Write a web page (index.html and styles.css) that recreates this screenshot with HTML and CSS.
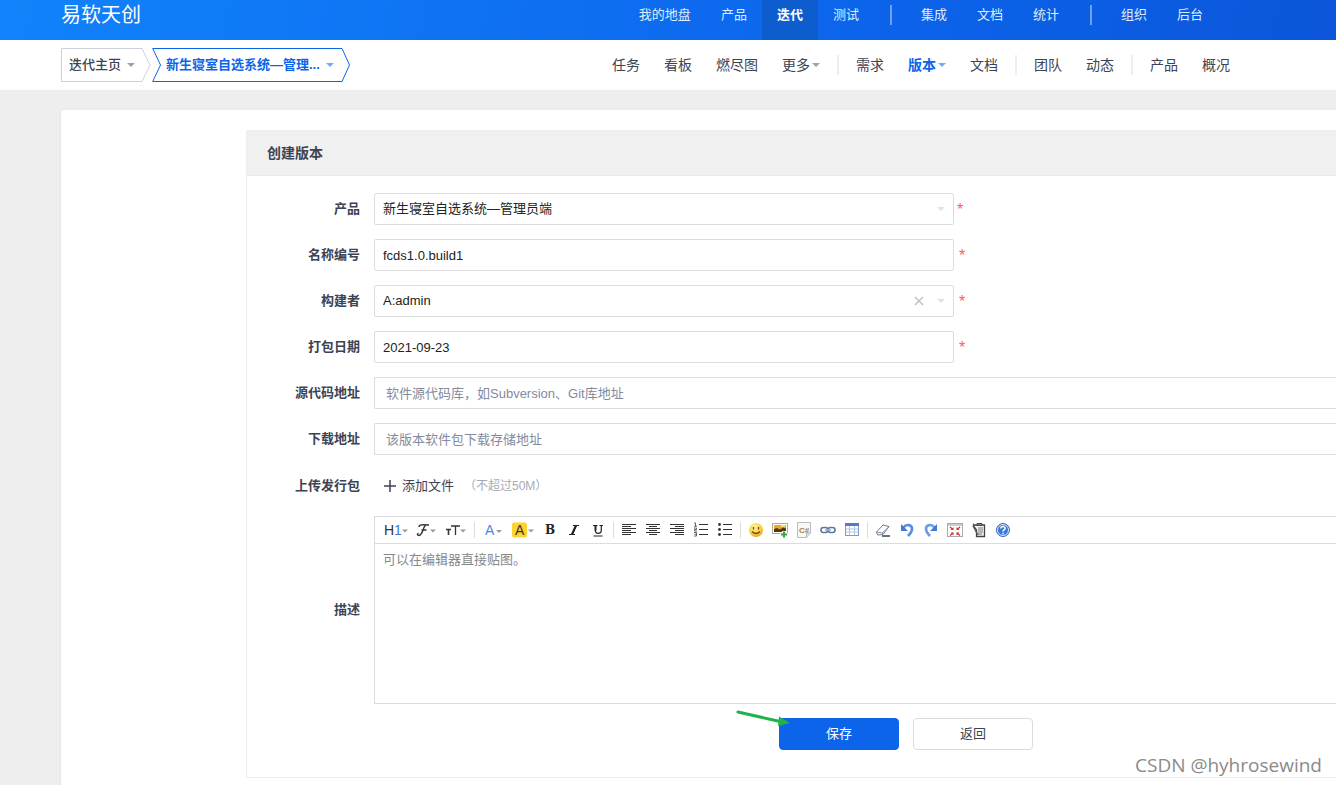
FILE: index.html
```html
<!DOCTYPE html>
<html lang="zh-CN">
<head>
<meta charset="utf-8">
<meta name="viewport" content="width=device-width, initial-scale=1">
<title>创建版本</title>
<link rel="stylesheet" href="styles.css">
</head>
<body>
<header class="topbar">
  <a class="brand" href="#">易软天创</a>
  <nav class="mainnav" aria-label="主导航">
    <a href="#">我的地盘</a><a href="#">产品</a><a href="#" class="active">迭代</a><a href="#">测试</a>
    <span class="divider"></span>
    <a href="#">集成</a><a href="#">文档</a><a href="#">统计</a>
    <span class="divider"></span>
    <a href="#">组织</a><a href="#">后台</a>
  </nav>
</header>

<div class="subbar">
  <div class="crumbs">
    <button type="button" class="crumb crumb-home">
      <svg class="crumb-shape" width="90" height="34" viewBox="0 0 90 34"><path d="M81 .5H.5v33H81l8-16.500z" fill="#fff" stroke="#cbd0db"/></svg>
      <span class="crumb-text">迭代主页</span><span class="caret"></span>
    </button>
    <button type="button" class="crumb crumb-current">
      <svg class="crumb-shape" width="198" height="34" viewBox="0 0 198 34"><path d="M.7.500H190l7.500 16.500-7.500 16.500H.7L8.500 17z" fill="#fff" stroke="#0c64eb"/></svg>
      <span class="crumb-text">新生寝室自选系统—管理...</span><span class="caret"></span>
    </button>
  </div>
  <nav class="subnav" aria-label="迭代导航">
    <a href="#">任务</a><a href="#">看板</a><a href="#">燃尽图</a><a href="#">更多<span class="caret"></span></a>
    <span class="divider"></span>
    <a href="#">需求</a><a href="#" class="active">版本<span class="caret"></span></a><a href="#">文档</a>
    <span class="divider"></span>
    <a href="#">团队</a><a href="#">动态</a>
    <span class="divider"></span>
    <a href="#">产品</a><a href="#">概况</a>
  </nav>
</div>

<main class="card">
  <section class="panel">
    <h2 class="panel-title">创建版本</h2>
    <form class="form">
      <div class="row">
        <label for="product">产品</label>
        <div class="control fixed">
          <select id="product"><option>新生寝室自选系统—管理员端</option></select>
          <span class="addons"><span class="caret"></span></span>
        </div>
        <span class="required tight">*</span>
      </div>
      <div class="row">
        <label for="name">名称编号</label>
        <div class="control fixed"><input id="name" type="text" value="fcds1.0.build1"></div>
        <span class="required">*</span>
      </div>
      <div class="row">
        <label for="builder">构建者</label>
        <div class="control fixed">
          <select id="builder"><option>A:admin</option></select>
          <span class="addons">
            <svg width="10" height="10" viewBox="0 0 10 10"><path d="M1 1l8 8M9 1L1 9" stroke="#c4c4c4" stroke-width="1.600"/></svg>
            <span class="caret"></span>
          </span>
        </div>
        <span class="required">*</span>
      </div>
      <div class="row">
        <label for="date">打包日期</label>
        <div class="control fixed"><input id="date" type="text" value="2021-09-23"></div>
        <span class="required">*</span>
      </div>
      <div class="row">
        <label for="scm">源代码地址</label>
        <div class="control wide"><input id="scm" type="text" placeholder="软件源代码库，如Subversion、Git库地址"></div>
      </div>
      <div class="row">
        <label for="download">下载地址</label>
        <div class="control wide"><input id="download" type="text" placeholder="该版本软件包下载存储地址"></div>
      </div>
      <div class="row">
        <label for="upload">上传发行包</label>
        <div class="upload">
          <button type="button" id="upload"><svg width="12" height="12" viewBox="0 0 12 12"><path d="M6 0v12M0 6h12" stroke="#3c4353" stroke-width="1.500"/></svg>添加文件</button>
          <span class="hint">（不超过50M）</span>
        </div>
      </div>
      <div class="row">
        <label for="desc">描述</label>
        <div class="editor">
          <div class="toolbar">
            <button type="button" class="tool drop" aria-label="标题"><svg width="24" height="16" viewBox="0 0 24 16"><text x="0" y="13" class="g-sans" fill="#333">H</text><text x="10" y="13" class="g-sans" fill="#3c78e0">1</text><path d="M18 7.500h6l-3 3z" fill="#999"/></svg></button>
            <button type="button" class="tool drop" aria-label="字体"><svg width="20" height="16" viewBox="0 0 20 16"><path d="M3 5C3 2.500 6 2.500 13 3M10 3C7 4 7 13 3 13.500 1 13.500 1 11.500 2.500 11.500M5.500 8h5" fill="none" stroke="#333" stroke-width="1.400"/><path d="M14 7.500h6l-3 3z" fill="#999"/></svg></button>
            <button type="button" class="tool drop" aria-label="字号"><svg width="20" height="16" viewBox="0 0 20 16"><path d="M0 7.500h5M2.500 7.500V13" stroke="#333" stroke-width="1.600"/><path d="M5 4h9M9.500 4v9" stroke="#333" stroke-width="1.300"/><path d="M14 7.500h6l-3 3z" fill="#999"/></svg></button>
            <span class="sep"></span>
            <button type="button" class="tool drop" aria-label="文字颜色"><svg width="17" height="16" viewBox="0 0 17 16"><text x="0" y="13" class="g-sans" fill="#4a86ee">A</text><path d="M11 8h6l-3 3z" fill="#999"/></svg></button>
            <button type="button" class="tool drop" aria-label="文字背景"><svg width="22" height="16" viewBox="0 0 22 16"><rect width="15" height="15" y=".5" rx="2" fill="#fdd32f"/><text x="3" y="13" class="g-sans" fill="#333">A</text><path d="M16 7.500h6l-3 3z" fill="#999"/></svg></button>
            <button type="button" class="tool" aria-label="粗体"><svg width="16" height="16" viewBox="0 0 16 16"><text x="3" y="12" class="g-serif" fill="#222">B</text></svg></button>
            <button type="button" class="tool" aria-label="斜体"><svg width="16" height="16" viewBox="0 0 16 16"><path d="M7 3.500h6M3 12.500h6" stroke="#222" stroke-width="1.200"/><path d="M10 3.500l-4 9" stroke="#222" stroke-width="2.200"/></svg></button>
            <button type="button" class="tool" aria-label="下划线"><svg width="16" height="16" viewBox="0 0 16 16"><path d="M3 3.500h4.500M9.500 3.500H13M3.500 14h9" stroke="#222" stroke-width="1.200"/><path d="M5.500 3.500v5" stroke="#222" stroke-width="2"/><path d="M5.300 8c0 4.500 6 4.500 6 0V3.500" fill="none" stroke="#222" stroke-width="1.200"/></svg></button>
            <span class="sep"></span>
            <button type="button" class="tool" aria-label="左对齐"><svg width="16" height="16" viewBox="0 0 16 16"><path d="M1 2.500h14M1 4.500h9M1 6.500h14M1 8.500h9M1 10.500h14M1 12.500h9" stroke="#333"/></svg></button>
            <button type="button" class="tool" aria-label="居中"><svg width="16" height="16" viewBox="0 0 16 16"><path d="M1 2.500h14M4 4.500h8M1 6.500h14M4 8.500h8M1 10.500h14M4 12.500h8" stroke="#333"/></svg></button>
            <button type="button" class="tool" aria-label="右对齐"><svg width="16" height="16" viewBox="0 0 16 16"><path d="M1 2.500h14M6 4.500h9M1 6.500h14M6 8.500h9M1 10.500h14M6 12.500h9" stroke="#333"/></svg></button>
            <button type="button" class="tool" aria-label="编号"><svg width="16" height="16" viewBox="0 0 16 16"><path d="M6 2.500h9M6 7.500h9M6 12.500h9" stroke="#333"/><path d="M1 1h1.500v3M1 4.200h3M1 6h2.500v1.500H1.500V9H4M1 10.500h2.500V14H1M1.500 12.200h2" fill="none" stroke="#555" stroke-width=".9"/></svg></button>
            <button type="button" class="tool" aria-label="项目符号"><svg width="16" height="16" viewBox="0 0 16 16"><path d="M6 2.500h9M6 7.500h9M6 12.500h9" stroke="#333"/><circle cx="2.500" cy="2.500" r="1.400" fill="#333"/><circle cx="2.500" cy="7.500" r="1.400" fill="#333"/><circle cx="2.500" cy="12.500" r="1.400" fill="#333"/></svg></button>
            <span class="sep"></span>
            <button type="button" class="tool" aria-label="表情"><svg width="16" height="16" viewBox="0 0 16 16"><defs><radialGradient id="face" cx=".4" cy=".3" r=".8"><stop offset="0" stop-color="#fff3a0"/><stop offset=".6" stop-color="#fbcf3d"/><stop offset="1" stop-color="#df9420"/></radialGradient></defs><circle cx="8" cy="8" r="7" fill="url(#face)"/><path d="M5.500 5v2.500M10.500 5v2.500M4 9.500q4 4 8 0" fill="none" stroke="#7b4a12" stroke-width="1.300"/></svg></button>
            <button type="button" class="tool" aria-label="图片"><svg width="16" height="16" viewBox="0 0 16 16"><rect x=".5" y="1.500" width="15" height="10" fill="#fff" stroke="#aaa"/><path d="M2 3h12v7H2z" fill="#f3a51e"/><path d="M2 7l3-1 3 1.500 3-2 3 1V10H2z" fill="#4d3b1c"/><path d="M9 3h4v2H9z" fill="#ffe069"/><path d="M12 9v7M8.500 12.500h7" stroke="#fff" stroke-width="4"/><path d="M12 9.500v6M9 12.500h6" stroke="#37a646" stroke-width="2.200"/></svg></button>
            <button type="button" class="tool" aria-label="插入代码"><svg width="16" height="16" viewBox="0 0 16 16"><path d="M1.500.5h13V11l-4 4.500h-9z" fill="#f8f8f8" stroke="#bbb"/><path d="M14.500 11h-4v4.500" fill="#ddd" stroke="#bbb"/><text x="3" y="11" class="g-code" fill="#a9783c">C#</text></svg></button>
            <button type="button" class="tool" aria-label="链接"><svg width="16" height="16" viewBox="0 0 16 16"><rect x="1" y="5.500" width="7" height="5" rx="2.500" fill="none" stroke="#5e789d" stroke-width="1.600"/><rect x="8" y="5.500" width="7" height="5" rx="2.500" fill="none" stroke="#5e789d" stroke-width="1.600"/><path d="M5 8h6" stroke="#9bb0ce" stroke-width="1.600"/></svg></button>
            <button type="button" class="tool" aria-label="表格"><svg width="16" height="16" viewBox="0 0 16 16"><rect x="1.500" y="1.500" width="13" height="12" fill="#fff" stroke="#7b9bd0"/><path d="M1 1h14v3H1z" fill="#527bc5"/><path d="M2 7h12M2 10h12M5.500 4v9M10.500 4v9" stroke="#b2c5e5"/></svg></button>
            <span class="sep"></span>
            <button type="button" class="tool" aria-label="清除格式"><svg width="16" height="16" viewBox="0 0 16 16"><path d="M1.500 10L8 3l6 1.500-6 8-5.500.5z" fill="#fff" stroke="#6e7c93"/><path d="M1.500 10l6 1L14 4.500M7.500 11v2" fill="none" stroke="#8290a8"/><path d="M7 14h8" stroke="#222" stroke-width="1.300"/></svg></button>
            <button type="button" class="tool" aria-label="撤销"><svg width="16" height="16" viewBox="0 0 16 16"><path d="M4 6c4-5 9-3 9 1 0 3-2 5-4 7" fill="none" stroke="#5d8de0" stroke-width="2.700"/><path d="M2 2v7h7z" fill="#4479d4"/></svg></button>
            <button type="button" class="tool" aria-label="重做"><svg width="16" height="16" viewBox="0 0 16 16"><path d="M12 6C8 1 3 3 3 7c0 3 2 5 4 7" fill="none" stroke="#6f9be5" stroke-width="2.700"/><path d="M14 2v7H7z" fill="#4479d4"/></svg></button>
            <button type="button" class="tool" aria-label="全屏"><svg width="16" height="16" viewBox="0 0 16 16"><rect x=".5" y="1.500" width="15" height="13" fill="#fff" stroke="#aaa"/><path d="M1 2h14v2H1z" fill="#ccc"/><path d="M3 5l3 2.500M13 5l-3 2.500M3 13.500L6 11M13 13.500L10 11" stroke="#ce3434" stroke-width="1.300"/><path d="M6.500 5v3h-3zM9.500 5v3h3zM6.500 13.500v-3h-3zM9.500 13.500v-3h3z" fill="#ce3434"/></svg></button>
            <button type="button" class="tool" aria-label="源代码"><svg width="16" height="16" viewBox="0 0 16 16"><path d="M4.500 3.500L2 2M4 3h9.500v11.500h-8V8L2 3" fill="#f4f4f4" stroke="#444" stroke-width="1.300"/><path d="M6 1.500h5v2H6z" fill="#888" stroke="#444"/><path d="M7 6h5M7 8h5M7 10h5M7 12h4" stroke="#777"/><path d="M2 4l5 9" stroke="#555" stroke-width="1.400"/></svg></button>
            <button type="button" class="tool" aria-label="帮助"><svg width="16" height="16" viewBox="0 0 16 16"><circle cx="8" cy="8" r="6.500" fill="#3b76d6" stroke="#3b6cbf"/><circle cx="8" cy="8" r="5.500" fill="none" stroke="#dce8fb"/><path d="M5.800 6.500c0-3 4.600-2.600 4.300-.1C10 8 8 7.800 8 9.500M8 10.800v1.500" fill="none" stroke="#fff" stroke-width="1.500"/></svg></button>
          </div>
          <textarea id="desc" placeholder="可以在编辑器直接贴图。"></textarea>
        </div>
      </div>
      <div class="actions">
        <div class="save-wrap">
          <button type="submit" class="btn primary">保存</button>
          <svg class="pointer" width="56" height="18" viewBox="0 0 56 18"><path d="M2 3l42 9.500" stroke="#22b14c" stroke-width="3" stroke-linecap="round"/><path d="M43 7.500L54 14l-12 3z" fill="#22b14c"/></svg>
        </div>
        <button type="button" class="btn">返回</button>
      </div>
    </form>
  </section>
</main>
<div class="watermark">CSDN @hyhrosewind</div>
</body>
</html>
```

FILE: styles.css
```css
* { box-sizing: border-box; }

body {
  position: relative;
  display: flex;
  flex-direction: column;
  min-height: 100vh;
  margin: 0;
  background: #eee;
  color: #3c4353;
  font-family: "Liberation Sans", "Noto Sans CJK SC", sans-serif;
  font-size: 13px;
  line-height: 20px;
}

a { color: inherit; text-decoration: none; }

button, input, select, textarea {
  margin: 0;
  color: inherit;
  font: inherit;
}

button { padding: 0; border: 0; background: none; cursor: pointer; }

svg { display: block; flex: none; }

.caret {
  display: inline-block;
  flex: none;
  border: 4px solid transparent;
  border-top-color: currentColor;
  border-bottom: 0;
  color: #9ba0ab;
}

/* Top bar */
.topbar {
  display: flex;
  height: 40px;
  padding: 0 118px 0 61px;
  background: linear-gradient(100deg, #1183fb, #0c64eb 65%, #0b56da);
  color: #fff;
}

.brand { font-size: 20px; line-height: 30px; white-space: nowrap; }

.mainnav { display: flex; margin-left: auto; white-space: nowrap; }

.mainnav a {
  padding: 0 15px;
  color: #dfecff;
  line-height: 29px;
}

.mainnav .active {
  background: #0d5dce;
  color: #fff;
  font-weight: bold;
}

.mainnav .divider {
  width: 2px;
  height: 20px;
  margin: 5px 14px 0 16px;
  background: #6da3f5;
}

/* Second bar */
.subbar {
  display: flex;
  align-items: center;
  height: 50px;
  padding: 0 94px 0 61px;
  background: #fff;
}

.crumbs { display: flex; gap: 1px; }

.crumb {
  position: relative;
  display: flex;
  align-items: center;
  gap: 6px;
  height: 34px;
  white-space: nowrap;
  font-weight: 500;
}

.crumb-home { width: 90px; padding-left: 8px; }
.crumb-current { width: 198px; padding-left: 14px; color: #0c64eb; font-weight: bold; }
.crumb-current .caret { color: #73a8f5; }
.crumb-shape { position: absolute; top: 0; left: 0; }
.crumb-text, .crumb .caret { position: relative; }

.subnav {
  display: flex;
  align-items: center;
  margin-left: auto;
  font-size: 14px;
  white-space: nowrap;
}

.subnav a { display: flex; align-items: center; gap: 2px; padding: 0 12px; }
.subnav .active { color: #0c64eb; font-weight: bold; }
.subnav .active .caret { color: #73a8f5; }
.subnav .divider { width: 2px; height: 20px; margin: 0 5px; background: #eee; }

/* Card and panel */
.card {
  flex: 1;
  margin: 20px 0 0 61px;
  padding: 20px 0 8px 185px;
  border-radius: 4px 0 0 0;
  background: #fff;
  box-shadow: 0 1px 2px rgba(0, 0, 0, .1);
}

.panel { border: 1px solid #eee; border-right: 0; }

.panel-title {
  margin: 0;
  padding: 12px 20px;
  border-bottom: 1px solid #eaeaea;
  background: #f0f0f0;
  font-size: 14px;
  line-height: 20px;
}

.form { display: flex; flex-direction: column; gap: 14px; padding: 17px 0 27px; }

.row { display: flex; align-items: center; }

.row label {
  flex: none;
  width: 113px;
  margin-right: 14px;
  font-weight: bold;
  text-align: right;
}

.control { position: relative; }
.fixed { width: 580px; }
.wide { flex: 1; }

.control input, .control select {
  display: block;
  width: 100%;
  height: 32px;
  padding: 0 8px;
  border: 1px solid #dcdcdc;
  border-radius: 2px;
  outline: 0;
  appearance: none;
  background: #fff;
  color: #222;
}

.wide input { padding: 0 11px; border-right: 0; border-radius: 2px 0 0 2px; }
.wide input::placeholder { color: #838a9d; }

.addons {
  position: absolute;
  top: 0;
  right: 9px;
  bottom: 0;
  display: flex;
  align-items: center;
  gap: 13px;
  pointer-events: none;
}

.addons .caret { color: #dfe2e8; }

.required { margin-left: 5px; padding-top: 2px; color: #ff5d5d; font-size: 16px; line-height: 20px; }
.required.tight { margin-left: 3px; }

.upload { display: flex; align-items: center; gap: 10px; height: 33px; padding-left: 10px; }
.upload button { display: flex; align-items: center; gap: 6px; }
.hint { color: #a6aab8; font-size: 12px; }

/* Rich text editor */
.editor { flex: 1; min-width: 0; border: 1px solid #dcdcdc; border-right: 0; }

.toolbar {
  display: flex;
  align-items: center;
  height: 27px;
  padding-left: 6px;
  border-bottom: 1px solid #dcdcdc;
}

.tool { display: flex; flex: none; align-items: center; justify-content: center; width: 24px; height: 24px; }
.tool.drop { width: 30px; }
.sep { flex: none; width: 7px; height: 16px; background: linear-gradient(#ddd, #ddd) 3px 0 / 1px 100% no-repeat; }

.g-sans { font: 14px "Liberation Sans", sans-serif; }
.g-serif { font: bold 12px "DejaVu Serif", serif; }
.g-code { font: bold 8px "Liberation Sans", sans-serif; }

.editor textarea {
  display: block;
  width: 100%;
  height: 159px;
  padding: 6px 8px;
  border: 0;
  outline: 0;
  resize: none;
  background: #fff;
}

.editor textarea::placeholder { color: #888; }

/* Buttons */
.actions { display: flex; gap: 14px; padding-left: 532px; }

.save-wrap { position: relative; }

.btn {
  display: block;
  width: 120px;
  height: 32px;
  border: 1px solid #d8dbe2;
  border-radius: 4px;
  background: #fff;
}

.primary { border-color: #0c64eb; background: #0c64eb; color: #fff; }

.pointer { position: absolute; top: -9px; left: -43px; pointer-events: none; }

.watermark {
  position: absolute;
  right: 14px;
  bottom: 8px;
  color: #8a8a8a;
  font-family: "Open Sans", sans-serif;
  font-size: 19px;
  line-height: 26px;
  text-shadow: 1px 1px 0 #fff;
}
```
